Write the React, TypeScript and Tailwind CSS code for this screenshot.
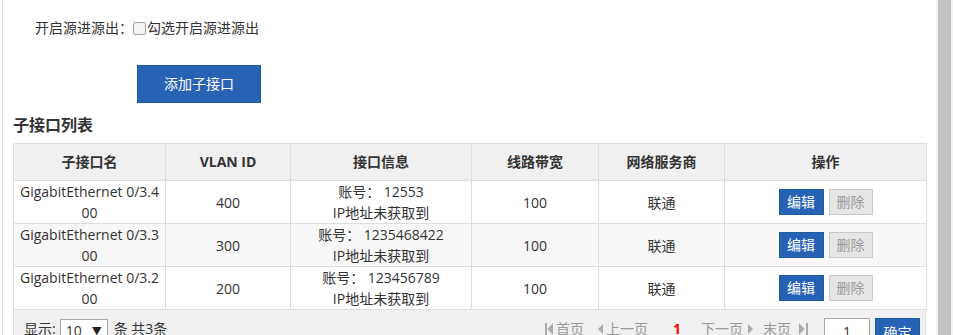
import React from "react";

const rows = [
  { name: "GigabitEthernet 0/3.4", name2: "00", vlan: "400", acct: "12553", bg: "bg-white" },
  { name: "GigabitEthernet 0/3.3", name2: "00", vlan: "300", acct: "1235468422", bg: "bg-[#f7f7f7]" },
  { name: "GigabitEthernet 0/3.2", name2: "00", vlan: "200", acct: "123456789", bg: "bg-white" },
];

function FirstIcon() {
  return (
    <svg width="8" height="12" viewBox="0 0 8 12" className="fill-[#aaaaaa]">
      <rect x="0" y="0" width="2" height="12" />
      <polygon points="8,0 2.5,6 8,12" />
    </svg>
  );
}
function PrevIcon() {
  return (
    <svg width="5" height="10" viewBox="0 0 5 10" className="fill-[#aaaaaa]">
      <polygon points="5,0 0,5 5,10" />
    </svg>
  );
}
function NextIcon() {
  return (
    <svg width="5" height="10" viewBox="0 0 5 10" className="fill-[#aaaaaa]">
      <polygon points="0,0 5,5 0,10" />
    </svg>
  );
}
function LastIcon() {
  return (
    <svg width="9" height="12" viewBox="0 0 9 12" className="fill-[#aaaaaa]">
      <polygon points="0,0 5.5,6 0,12" />
      <rect x="7" y="0" width="2" height="12" />
    </svg>
  );
}

export default function App() {
  return (
    <div className="w-[953px] h-[335px] overflow-hidden bg-white flex font-['Open_Sans','Noto_Sans_CJK_SC',sans-serif] text-[14px] text-[#333333]">
      <div className="w-[2px] shrink-0" />
      <div className="w-[934px] shrink-0 border-l border-[#d8d8d8] pl-[10px] pr-[10px]">
        {/* option row */}
        <div className="flex items-center pt-[18px] pl-[22px] leading-[20px]">
          <span>开启源进源出：</span>
          <input
            type="checkbox"
            className="appearance-none w-[13px] h-[13px] border border-[#a6a6a6] rounded-[2px] bg-[#f3f3f3] m-0"
          />
          <span className="ml-[1px]">勾选开启源进源出</span>
        </div>

        {/* add button */}
        <button className="mt-[27px] ml-[124px] w-[124px] h-[38px] bg-[#2862b4] border border-[#1b5e9e] text-white text-[14px] leading-[20px]">
          添加子接口
        </button>

        {/* heading */}
        <div className="mt-[11px] text-[16px] font-bold leading-[22px]">子接口列表</div>

        {/* table */}
        <table className="mt-[7px] w-[913px] table-fixed border-collapse text-center">
          <colgroup>
            <col className="w-[152px]" />
            <col className="w-[125px]" />
            <col className="w-[181px]" />
            <col className="w-[127px]" />
            <col className="w-[126px]" />
            <col className="w-[202px]" />
          </colgroup>
          <thead>
            <tr className="h-[37px] bg-[#f0f0f0]">
              {["子接口名", "VLAN ID", "接口信息", "线路带宽", "网络服务商", "操作"].map((h) => (
                <th key={h} className="border border-[#dddddd] font-bold leading-[20px] p-0">
                  {h}
                </th>
              ))}
            </tr>
          </thead>
          <tbody>
            {rows.map((r) => (
              <tr key={r.vlan} className={`h-[43px] ${r.bg}`}>
                <td className="border border-[#dddddd] px-[4px] leading-[21px]">
                  {r.name}
                  <br />
                  {r.name2}
                </td>
                <td className="border border-[#dddddd] leading-[21px]">{r.vlan}</td>
                <td className="border border-[#dddddd] leading-[21px]">
                  账号： {r.acct}
                  <br />
                  IP地址未获取到
                </td>
                <td className="border border-[#dddddd] leading-[21px]">100</td>
                <td className="border border-[#dddddd] leading-[21px]">联通</td>
                <td className="border border-[#dddddd]">
                  <div className="flex justify-center gap-[5px]">
                    <button className="w-[45px] h-[26px] bg-[#2862b4] border border-[#1b5e9e] text-white leading-[20px]">
                      编辑
                    </button>
                    <button className="w-[44px] h-[26px] bg-[#e6e6e6] border border-[#c9c9c9] text-[#999999] leading-[20px]">
                      删除
                    </button>
                  </div>
                </td>
              </tr>
            ))}
          </tbody>
        </table>

        {/* pager */}
        <div className="w-[913px] h-[40px] bg-[#f0f0f0] border-x border-[#dddddd] flex items-start pt-[8px] pl-[10px] pr-[5px]">
          <span className="leading-[20px] mt-[1px]">显示:</span>
          <div className="ml-[4px] mt-[1px] w-[48px] h-[24px] bg-white border border-[#a9a9a9] flex items-center pl-[5px] pr-[5px]">
            <span className="leading-[20px]">10</span>
            <span className="ml-auto text-[10px] leading-[20px] text-[#222]">▼</span>
          </div>
          <span className="ml-[6px] leading-[20px] mt-[1px]">条 共3条</span>

          <div className="ml-auto flex items-start">
            <div className="mt-[5px] flex">
              <FirstIcon />
            </div>
            <span className="ml-[3px] leading-[20px] mt-[1px] text-[#999999]">首页</span>
            <div className="ml-[14px] mt-[6px] flex">
              <PrevIcon />
            </div>
            <span className="ml-[3px] leading-[20px] mt-[1px] text-[#999999]">上一页</span>
            <span className="ml-[25px] w-[8px] leading-[20px] mt-[1px] font-bold text-[#ff0000]">1</span>
            <span className="ml-[20px] leading-[20px] mt-[1px] text-[#999999]">下一页</span>
            <div className="ml-[5px] mt-[6px] flex">
              <NextIcon />
            </div>
            <span className="ml-[10px] leading-[20px] mt-[1px] text-[#999999]">末页</span>
            <div className="ml-[8px] mt-[5px] flex">
              <LastIcon />
            </div>
            <div className="ml-[16px] w-[46px] h-[28px] bg-white border border-[#a9a9a9] flex items-center justify-center leading-[20px]">
              1
            </div>
            <button className="ml-[5px] w-[45px] h-[30px] bg-[#2862b4] border border-[#1b5e9e] text-white leading-[20px]">
              确定
            </button>
          </div>
        </div>
      </div>
      <div className="w-[17px] shrink-0 bg-[#f1f1f1] px-[2px]">
        <div className="h-full bg-[#c1c1c1]" />
      </div>
    </div>
  );
}
